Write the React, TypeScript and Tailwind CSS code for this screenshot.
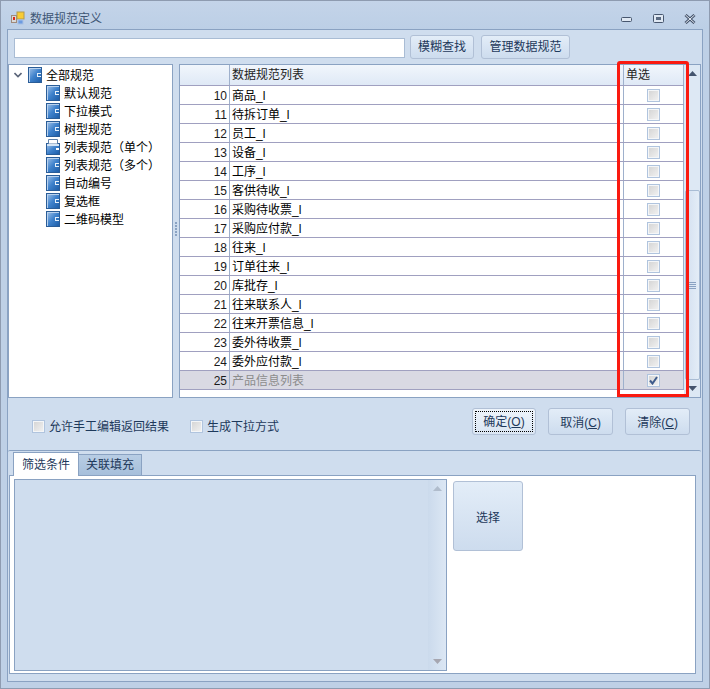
const rows = [
  [10, '商品_l'],
  [11, '待拆订单_l'],
  [12, '员工_l'],
  [13, '设备_l'],
  [14, '工序_l'],
  [15, '客供待收_l'],
  [16, '采购待收票_l'],
  [17, '采购应付款_l'],
  [18, '往来_l'],
  [19, '订单往来_l'],
  [20, '库批存_l'],
  [21, '往来联系人_l'],
  [22, '往来开票信息_l'],
  [23, '委外待收票_l'],
  [24, '委外应付款_l'],
] as const;

const treeItems = ['默认规范', '下拉模式', '树型规范', '列表规范（单个）', '列表规范（多个）', '自动编号', '复选框', '二维码模型'];

function BookIcon({ open = false }: { open?: boolean }) {
  return (
    <svg width="14" height="16" viewBox="0 0 14 16" className="shrink-0">
      <defs>
        <linearGradient id="bookFill" x1="0" y1="0" x2="1" y2="1">
          <stop offset="0" stopColor="#a8c6ea" />
          <stop offset="0.5" stopColor="#3f82cc" />
          <stop offset="1" stopColor="#1c5ba6" />
        </linearGradient>
      </defs>
      {open ? (
        <>
          <rect x="0.5" y="4.5" width="13" height="11" fill="url(#bookFill)" stroke="#2a5d98" />
          <path d="M2.5 5V0.5H11.5V5Z" fill="#ffffff" stroke="#5b7fa8" />
          <rect x="1" y="5" width="12" height="2" fill="#d5e5f5" />
          <rect x="10" y="9" width="3" height="2" fill="#ffffff" />
        </>
      ) : (
        <>
          <rect x="0.5" y="0.5" width="13" height="15" fill="url(#bookFill)" stroke="#2a5d98" />
          <path d="M1 1H13V2H2V15H1Z" fill="#b9d2ee" />
          <path d="M9 6H13V10H9Z" fill="#e6f0fa" />
          <rect x="10" y="7" width="3" height="2" fill="#2e74c0" />
        </>
      )}
    </svg>
  );
}

function Check({ checked = false }: { checked?: boolean }) {
  return (
    <span className="flex h-[13px] w-[13px] shrink-0 items-center justify-center border border-[#b0c4de] bg-[#f4f6f8] p-px">
      <span className="relative flex h-full w-full items-center justify-center bg-gradient-to-br from-[#d6d6d6] to-[#f0f0f0]">
        {checked && (
          <svg width="9" height="9" viewBox="0 0 9 9" className="shrink-0">
            <path d="M1 4.5L3.5 7.5L8 1" fill="none" stroke="#3f5c8c" strokeWidth="2" />
          </svg>
        )}
      </span>
    </span>
  );
}

function Btn({ label, hot, className }: { label: string; hot?: string; className: string }) {
  return (
    <div
      className={`flex items-center justify-center rounded-[3px] border border-[#b1c0d6] bg-gradient-to-b from-[#e3edf8] to-[#cddcee] text-[12px] text-[#1e395b] ${className}`}
    >
      {label}
      {hot && (
        <>
          (<span className="underline">{hot}</span>)
        </>
      )}
    </div>
  );
}

function Arrow({ down = false, color }: { down?: boolean; color: string }) {
  return (
    <svg width="9" height="5" viewBox="0 0 9 5" className="shrink-0">
      <path d={down ? 'M0 0H9L4.5 5Z' : 'M0 5H9L4.5 0Z'} fill={color} />
    </svg>
  );
}

export default function App() {
  return (
    <div
      className="relative h-[689px] w-[710px] overflow-hidden border border-[#8e9bb0] bg-[#bed0e6] text-[12px] leading-none"
      style={{ fontFamily: '"Liberation Sans", "Noto Sans CJK SC", sans-serif' }}
    >
      {/* title bar */}
      <div className="flex h-[28px] items-center bg-gradient-to-b from-[#c4d4e9] to-[#bccfe6] pt-[7px] pl-[10px]">
        <svg width="15" height="15" viewBox="0 0 15 15" className="shrink-0">
          <rect x="0.5" y="4.5" width="5" height="7" fill="#d9d9d9" stroke="#a08a7a" />
          <rect x="2" y="6" width="2" height="3" fill="#d8291c" />
          <rect x="6" y="1" width="7" height="7" fill="#f8cc34" stroke="#b49a4a" />
          <rect x="7" y="9" width="5" height="4" fill="#6c9be0" stroke="#a8c0e4" />
        </svg>
        <span className="ml-[4px] text-[12px] text-[#3e5675]">数据规范定义</span>
        <div className="ml-auto flex items-center">
          <svg width="12" height="6" viewBox="0 0 12 6" className="mt-[2px] shrink-0">
            <rect x="0.5" y="0.5" width="10" height="4" rx="1" fill="#dfe8f3" stroke="#47566e" />
          </svg>
          <svg width="12" height="10" viewBox="0 0 12 10" className="ml-[20px] shrink-0">
            <rect x="0.5" y="0.5" width="10" height="8" rx="1" fill="#dfe8f3" stroke="#47566e" />
            <rect x="3" y="3" width="5" height="3" fill="#5b6b82" />
          </svg>
          <svg width="12" height="10" viewBox="0 0 12 10" className="mr-[13px] ml-[19px] shrink-0">
            <path d="M1.5 1L10.5 9M10.5 1L1.5 9" stroke="#47566e" strokeWidth="3" />
            <path d="M1.5 1L10.5 9M10.5 1L1.5 9" stroke="#e6edf5" strokeWidth="1" />
          </svg>
        </div>
      </div>

      {/* client area */}
      <div className="mx-[6px] h-[653px] border border-[#8aa2c2] bg-[#cfddee]">
        {/* search row */}
        <div className="flex h-[34px] items-start pl-[6px]">
          <div className="mt-[8px] h-[20px] w-[391px] border border-[#a9bcd4] bg-white" />
          <Btn label="模糊查找" className="mt-[5px] ml-[5px] h-[24px] w-[64px]" />
          <Btn label="管理数据规范" className="mt-[5px] ml-[7px] h-[24px] w-[89px]" />
        </div>

        {/* tree + grid */}
        <div className="flex h-[334px]">
          <div className="w-[165px] border border-[#8aa2c2] bg-white pt-[1px] text-[12px] text-black">
            <div className="flex h-[18px] items-center pl-[5px]">
              <svg width="8" height="6" viewBox="0 0 8 6" className="mr-[6px] shrink-0">
                <path d="M0.5 1L4 4.5L7.5 1" fill="none" stroke="#5a6478" strokeWidth="1.6" />
              </svg>
              <BookIcon />
              <span className="mt-[1px] ml-[4px]">全部规范</span>
            </div>
            {treeItems.map((t, i) => (
              <div key={t} className="flex h-[18px] items-center pl-[37px]">
                <BookIcon open={i === 3} />
                <span className="mt-[1px] ml-[4px]">{t}</span>
              </div>
            ))}
          </div>

          <div className="flex w-[6px] items-center justify-center pb-[5px]">
            <div className="flex flex-col gap-px">
              {[0, 1, 2, 3, 4].map((d) => (
                <span key={d} className="h-[2px] w-[2px] bg-[#8aa2c2]" />
              ))}
            </div>
          </div>

          <div className="flex w-[522px] border border-[#8aa2c2] bg-white">
            <div className="w-[504px]">
              <div className="flex h-[21px] border-b border-[#a0a0c0] bg-gradient-to-b from-[#f1f6fc] to-[#dfe9f6]">
                <div className="w-[50px] border-r border-[#9eb0cc]" />
                <div className="flex w-[394px] items-center border-r border-[#9eb0cc] pl-[2px] text-[#1e1e1e]">数据规范列表</div>
                <div className="flex w-[60px] items-center border-r border-[#9eb0cc] pl-[2px] text-[#1e1e1e]">单选</div>
              </div>
              {rows.map(([n, name]) => (
                <div key={n} className="flex h-[19px] border-b border-[#a0a0c0]">
                  <div className="flex w-[50px] items-center justify-end border-r border-[#9eb0cc] pt-[2px] pr-[2px] text-[#1a1a1a]">{n}</div>
                  <div className="flex w-[394px] items-center border-r border-[#9eb0cc] pt-[2px] pl-[2px] text-black">{name}</div>
                  <div className="flex w-[60px] items-center justify-center border-r border-[#9eb0cc]">
                    <Check />
                  </div>
                </div>
              ))}
              <div className="flex h-[19px] border-b border-[#a0a0c0] bg-[#d9d9e3]">
                <div className="flex w-[50px] items-center justify-end border-r border-[#9eb0cc] pt-[2px] pr-[2px] text-[#1a1a1a]">25</div>
                <div className="flex w-[394px] items-center border-r border-[#9eb0cc] pt-[2px] pl-[2px] text-[#8c8c8c]">产品信息列表</div>
                <div className="flex w-[60px] items-center justify-center border-r border-[#9eb0cc]">
                  <Check checked />
                </div>
              </div>
            </div>

            {/* scrollbar */}
            <div className="flex w-[16px] flex-col items-center bg-[#dde8f4]">
              <div className="flex h-[16px] items-center justify-center">
                <Arrow color="#44546e" />
              </div>
              <div className="mt-[109px] flex h-[190px] w-[15px] flex-col items-center justify-center rounded-[2px] border border-[#a9bcd4] bg-gradient-to-r from-[#d3e0f0] to-[#e4edf7]">
                <div className="flex flex-col gap-px">
                  {[0, 1, 2, 3].map((d) => (
                    <span key={d} className="h-px w-[8px] bg-[#8aa2c2]" />
                  ))}
                </div>
              </div>
              <div className="flex h-[16px] items-center justify-center">
                <Arrow down color="#44546e" />
              </div>
            </div>
          </div>
        </div>

        {/* options + actions */}
        <div className="flex h-[52px] items-start text-[#1e395b]">
          <div className="mt-[22px] ml-[24px] flex items-center">
            <Check />
            <span className="ml-[4px]">允许手工编辑返回结果</span>
          </div>
          <div className="mt-[22px] ml-[21px] flex items-center">
            <Check />
            <span className="ml-[4px]">生成下拉方式</span>
          </div>
          <div className="mt-[10px] ml-[193px] flex h-[27px] w-[64px] items-center justify-center rounded-[3px] border border-[#b1c0d6] bg-gradient-to-b from-[#eef4fb] to-[#dbe6f3] p-[2px]">
            <div className="flex h-full w-full items-center justify-center border border-dotted border-black pt-[1px]">
              确定(<span className="underline">O</span>)
            </div>
          </div>
          <Btn label="取消" hot="C" className="mt-[10px] ml-[12px] h-[27px] w-[65px] pt-[2px]" />
          <Btn label="清除" hot="C" className="mt-[10px] ml-[12px] h-[27px] w-[65px] pt-[2px]" />
        </div>

        {/* tab panel */}
        <div className="mr-[1px] h-[230px] rounded-t-[2px] border-t border-[#8aa2c2] bg-[#cfddee] pt-[1px]">
          <div className="flex h-[23px] items-end pl-[5px] text-[#1e395b]">
            <div className="z-10 -mb-px flex h-[24px] w-[66px] items-center justify-center border-x border-t border-[#8aa2c2] bg-white">
              筛选条件
            </div>
            <div className="flex h-[21px] w-[63px] items-center justify-center border-t border-r border-[#8aa2c2] bg-gradient-to-b from-[#b8cde4] to-[#a6bfdb]">
              关联填充
            </div>
          </div>
          <div className="ml-[1px] flex h-[199px] w-[687px] items-start border border-[#8aa2c2] bg-white pt-[3px] pl-[4px]">
            <div className="flex h-[192px] w-[433px] border border-[#8aa2c2] bg-[#cfddee]">
              <div className="ml-auto flex h-full w-[18px] flex-col items-center justify-between bg-gradient-to-r from-[#cbdaec] to-[#dce7f4] py-[6px]">
                <Arrow color="#b0bccc" />
                <Arrow down color="#a6a6b0" />
              </div>
            </div>
            <Btn label="选择" className="mt-[2px] ml-[6px] h-[70px] w-[70px] pt-[3px]" />
          </div>
        </div>
      </div>

      {/* red annotation drawn over the grid */}
      <div className="absolute top-[60px] left-[616px] h-[336px] w-[72px] rounded-t-[3px] border-[3px] border-[#fa1a10]" />
    </div>
  );
}
